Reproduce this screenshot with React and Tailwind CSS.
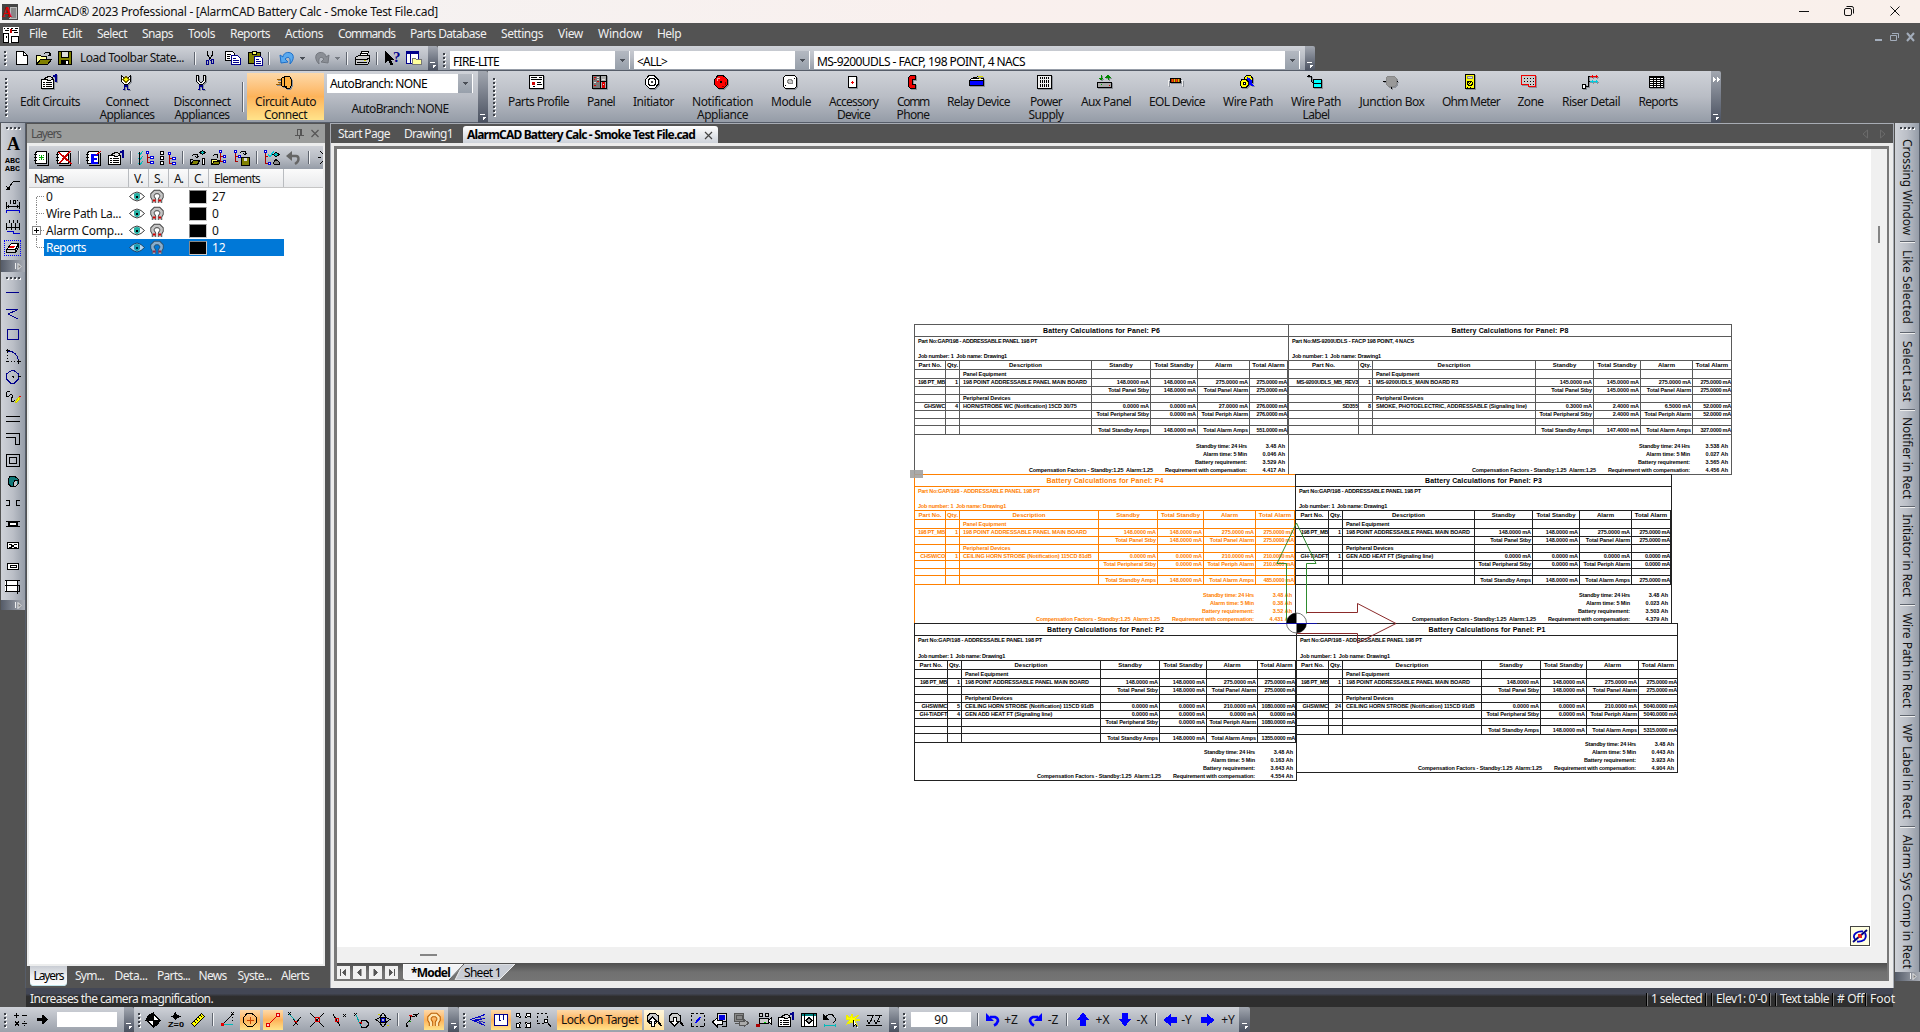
import React, { useLayoutEffect, useRef, useState } from "react";

/* Text whose tracking is tuned so that the run spans a given length. */
function Fit({ w, v, className = "", children }) {
  const ref = useRef(null);
  const [ls, setLs] = useState(null);
  useLayoutEffect(() => {
    const r = ref.current.getBoundingClientRect();
    const n = String(children).length;
    setLs((w - (v ? r.height : r.width)) / n);
  }, []);
  return (
    <span ref={ref} className={"inline-block whitespace-pre " + className} style={ls === null ? undefined : { letterSpacing: ls + "px" }}>
      {children}
    </span>
  );
}

const K = "#000";
const N = "none";
const B = "#00008b";
const MAG = "M5 14V10.5L3.5 8V5.5L6 3H10L12.5 5.5V8L11 10.5V14";
/* Each glyph is a list of [stroke, fill, path, strokeWidth?] or { t, x, y, s, c, f } captions. */
const G = {
  app: [[N, "#444", "M0 0H16V16H0Z"], ["#bbb", "#888", "M9 3H14V14H8Z"], { t: "A", x: 0, y: 13, s: 14, c: "#e00000", f: "Liberation Serif" }],
  doc: [[N, "#fff", "M0 0H16V16H0Z"], [K, "#fff", "M.5 6.5H5.5V15.5H.5ZM8.5 9.5H15.5V15.5H8.5Z"], [K, N, "M1 1.5H2M4 1.5H6M8 1.5H10M12 1.5H15M2 3.5H6M9 3.5H14M11 5.5H15M3 9V11"], ["#c00", "#c00", "M7.5 2.5H8.5V5.5H7.5Z"]],
  new: [[K, "#fff", "M2.5 1.5H9.5L13.5 5.5V14.5H2.5Z"], [K, N, "M9.5 1.5V5.5H13.5"]],
  open: [[K, "#ffff9c", "M.5 13.5V5.5H4.5L5.5 6.5H10.5V9.5H4.5Z"], [K, "#808000", "M.5 14.5L4.5 9.5H15.5L11.5 14.5Z"], [K, N, "M8 3.5L10 2.5H13L14 4.5M11.5 5.5H14.5V2.5"]],
  save: [[K, "#808000", "M1.5 1.5H14.5V14.5H1.5Z"], [K, "#ddd", "M4.5 1.5H11.5V7.5H4.5Z"], [N, K, "M4 10H12V15H4Z"], [N, "#fff", "M9 11H11V14H9Z"]],
  cut: [[K, N, "M5.5 1V5L8.5 9M10.5 1V5L7.5 9"], [B, N, "M4.5 10.5H6.5V14.5H4.5ZM9.5 9.5H11.5V13.5H9.5ZM7 9L9 11"]],
  copy: [[K, "#fff", "M.5 1.5H7.5L9.5 3.5V10.5H.5Z"], [B, "#fff", "M6.5 5.5H12.5L15.5 8.5V14.5H6.5Z"], [K, N, "M2 4.5H6M2 6.5H5M2 8.5H5"], [B, N, "M8 8.5H11M8 10.5H14M8 12.5H14"]],
  paste: [[K, "#808000", "M1.5 2.5H13.5V13.5H1.5Z"], [K, "#ffff66", "M5.5 1.5H9.5V4.5H5.5Z"], [B, "#fff", "M7.5 6.5H13.5L15.5 8.5V15.5H7.5Z"], [B, N, "M9 9.5H12M9 11.5H14M9 13.5H14"]],
  undo: [["#1e6fc8", "#5aa9ee", "M1 5L2 13L9 12L6 9C9 6 12 7 11 14C16 9 15 3 10 2.5C6 2 4 5 4 7Z"]],
  redo: [["#74787f", "#8a8e95", "M15 5L14 13L7 12L10 9C7 6 4 7 5 14C0 9 1 3 6 2.5C10 2 12 5 12 7Z"]],
  print: [[K, "#fff", "M4.5 6.5L6.5 1.5H13.5L11.5 6.5Z"], [K, "#ccc", "M.5 7.5L3.5 5.5H14.5V11.5L12.5 14.5H.5Z"], [K, N, "M1 9.5H12L15 7M2 12.5H12M6 3.5H12"], [N, "#cc0", "M9 10H11V11H9Z"]],
  help: [[K, K, "M.5 1.5V12.5L3.5 9.5L5.5 14.5H7.5L5.5 9.5H8.5Z"], { t: "?", x: 8, y: 12, s: 15, c: B, f: "Liberation Serif" }],
  win: [[B, "#fff", "M.5 1.5H12.5V13.5H.5Z"], [N, B, "M0 1H13V4H0Z"], [B, N, "M4.5 4V13"], ["#777", "#ffff9c", "M6.5 8.5H9.5L10.5 9.5H15.5V14.5H6.5Z"]],
  props: [[K, "#fff", "M.5 5.5H12.5V14.5H.5Z"], [K, N, "M2 8.5H4M5 8.5H11M2 10.5H4M5 10.5H11M2 12.5H4M5 12.5H11M3 5L6 3H10L12 5M7 6L10 4"], [K, "#ddd", "M4 5L8 2L12 4L9 7Z"], [N, B, "M12 1H14V3H12ZM14 0H16V8H14Z"]],
  conn: [[K, "#fff", "M3.5 1.5V7.5L6.5 10.5H9.5L12.5 7.5V1.5L10.5 3.5V6.5L8.5 8.5H7.5L5.5 6.5V3.5Z"], ["#776600", "#ff0", "M8 2.5L11 5.5L8 8.5L5 5.5Z"], [N, B, "M6 11H10V15H12V16H9V13H7V16H5V15H6Z"]],
  disc: [[K, "#eee", "M3.5 1.5V7.5L6.5 10.5H9.5L12.5 7.5V1.5H10.5V6.5L8.5 8.5H7.5L5.5 6.5V1.5Z"], [N, B, "M6 11H10V15H12V16H9V13H7V16H5V15H6Z"]],
  plug: [[K, "#ffb040", "M5.5 4.5L8.5 2.5H13.5L15.5 5.5V11.5L13.5 14.5H10.5L9.5 12.5H6.5L5.5 11.5Z"], [K, N, "M8.5 3V12M10.5 12V14"], ["#a06000", N, "M1 5.5H5M0 10.5H5M2 8.5H5"]],
  profile: [[K, "#fff", "M.5 1.5H14.5V14.5H.5Z"], [K, N, "M2 3.5H8M10 3.5H13M2 5.5H13M8 8.5H12M8 10.5H13M4 12.5H6"], [N, "#c00", "M3 8H6V11H3Z"]],
  panel: [[K, "#aaa", "M.5 1.5H14.5V14.5H.5Z"], [K, "#777", "M.5 1.5H8.5V14.5H.5Z"], [N, "#d00", "M2 3H4V4H2ZM2 5H3V6H2ZM5 7H7V8H5ZM2 11H4V12H2ZM10 8H13V14H10Z"], ["#ddd", N, "M5 3.5H7M5 5.5H7M2 8.5H4M9.5 5.5H13M11 10.5H12"], [K, N, "M9 7.5H14"]],
  init: [[K, "#fff", "M5 1.5H10L14.5 6V10L10.5 14.5H5.5L1.5 10.5V5.5Z"], [K, N, "M6 4.5H10L11.5 6V10L10 11.5H6L4.5 10V6Z"], ["#444", N, "M7 7.5H9M7 8.5H9"]],
  bell: [[K, "#f00", "M5 1.5H10L14.5 5.5V10.5L10.5 14.5H5.5L1.5 10.5V5.5Z"], [N, "#ff9c9c", "M4 4H7V5H5V7H4Z"], [N, "#800", "M9 12H11V13H9ZM12 8H13V11H12Z"], [N, K, "M7 7H9V9H7Z"]],
  module: [[K, "#fff", "M3.5 1.5H12.5L14.5 3.5V12.5L12.5 14.5H3.5L1.5 12.5V3.5Z"], ["#888", "#ccc", "M6.5 5.5H9.5V6.5H10.5V9.5H6.5V8.5H5.5V6.5H6.5Z"], [K, N, "M12 4.5H13M3 11.5H4"]],
  acc: [[K, "#fff", "M4.5 2.5H12.5V13.5H4.5Z"], ["#e00", N, "M7 8H10M8.5 6.5V9.5"]],
  phone: [[K, "#e00", "M6.5 1.5H11.5V5.5H8.5V10.5H11.5V14.5H6.5L4.5 12.5V3.5Z"]],
  relay: [[K, "#00f", "M.5 6.5H14.5V11.5H.5Z"], [K, "#fff", "M.5 6.5L2.5 4.5H14.5V6.5Z"], [K, N, "M2 4.5L10 2.5"], ["#dd0", N, "M9 2.5H14M10 4.5H12"]],
  power: [[K, "#eee", "M.5 1.5H14.5V14.5H.5Z"], [K, N, "M3.5 3V13M5.5 3V13M7.5 3V13M9.5 3V13M11.5 3V13"], ["#eee", N, "M2 5.5H13M2 9.5H13"]],
  aux: [[K, "#aaa", "M.5 8.5H14.5V13.5H.5Z"], [N, "#0a0", "M4 10H5V11H4Z"], [N, "#d00", "M12 11H13V12H12Z"], ["#080", "#080", "M2 4H6L4 6ZM4 1V4M9 3H13L11 1ZM11 3V6"]],
  eol: [["#eee", N, "M.5 12V6.5H3M12 6.5H14.5V12"], [K, "#a30", "M2.5 4.5H12.5V8.5H2.5Z"], ["#f40", N, "M4.5 5V8M8.5 5V8"], ["#cc0", N, "M6.5 5V8M10.5 5V8"]],
  wire: [[K, "#ff0", "M5 4L7.5 1.5H11.5L13.5 4V8L10 10Z"], ["#00f", "#00f", "M8.5 3.5L12 6V10L15 12L10 10Z"], [K, "#ff0", "M3 5.5H7L9.5 8V11L7 13.5H3L1.5 11V8Z"], [K, "#fff", "M4.5 8.5H6.5V10.5H4.5Z"]],
  wlabel: [[K, N, "M0 2.5H4.5V7.5L7 10M1 1.5H3"], [K, "#0ff", "M6.5 5.5H14.5V13.5H6.5Z"], [K, N, "M7 9.5H14"]],
  junc: [[K, N, "M0 7.5H4M12 7.5H15M8 12V15"], ["#888", "#999", "M4.5 2.5H11.5L13.5 4.5V10.5L11.5 12.5H5.5L3.5 10.5V3.5Z"]],
  ohm: [[K, "#ff0", "M3.5 .5H12.5V14.5H3.5Z"], ["#888", "#ddd", "M5.5 2.5H10.5V4.5H5.5Z"], [K, N, "M6 8.5L7.5 7H9L10.5 8.5V10L9 11.5H7L5.5 10V8ZM7 10L10 7M5 13.5H6M8 13.5H9"]],
  zone: [["#e00", "#ccc", "M.5 1.5H14.5V12.5H7.5V10.5H.5Z"], [K, N, "M3 4.5H4M6 4.5H7M9 4.5H10M12 4.5H13M3 7.5H4M6 7.5H7M9 7.5H10M12 7.5H13M9 10.5H10M12 10.5H13"]],
  riser: [[K, "#fff", "M.5 10.5H3.5V14.5H.5Z"], [K, N, "M4 12.5H6.5V2.5H9M6.5 7.5H9"], ["#e00", N, "M8 2.5H16M10 1V4M14 1V4"], ["#0cd", N, "M8 7.5H16M10 6V9M14 6V9"]],
  reports: [[K, "#fff", "M.5 2.5H14.5V13.5H.5Z"], [K, N, "M1 3.5H14M1 5.5H14M1 7.5H14M1 9.5H14M1 11.5H14M4.5 3V13M7.5 3V13M11.5 3V13"]],
  lnew: [[K, "#fff", "M1.5 2.5L3.5 1.5H12.5V13.5H1.5Z"], [K, N, "M14.5 3V15.5H3M0 4.5H3M0 7.5H3M0 10.5H3"], ["#0a0", N, "M7.5 5V10M5 7.5H10M5 5L6 6M10 5L9 6M5 10L6 9M10 10L9 9"]],
  ldel: [[K, "#fff", "M1.5 2.5L3.5 1.5H12.5V13.5H1.5Z"], [K, N, "M14.5 3V15.5H3M0 4.5H3M0 7.5H3M0 10.5H3"], ["#c00", N, "M2 2L15 14M3 2L16 14M14 1L3 13M15 1L4 13"]],
  ledit: [[K, "#fff", "M1.5 2.5L3.5 1.5H12.5V13.5H1.5Z"], [K, N, "M14.5 3V15.5H3M0 4.5H3M0 7.5H3M0 10.5H3"], [N, "#00f", "M5 4H12V6H8V8H11V10H8V12H12V14H5Z"], ["#c00", N, "M10 5L15 1"]],
  checks: [["#0bb", N, "M0 3L2 5L5 1M0 8L2 10L5 6M0 13L2 15L5 11"], [K, N, "M1.5 2V15"], ["#00d", "#fff", "M8.5 1.5H10.5V3.5H8.5ZM12.5 6.5H15.5V8.5H12.5ZM12.5 11.5H15.5V13.5H12.5Z"], ["#a00", N, "M9.5 4V12.5H12M9.5 7.5H12"]],
  boxes: [[K, "#fff", "M.5 1.5H3.5V4.5H.5ZM.5 6.5H3.5V9.5H.5ZM.5 11.5H3.5V14.5H.5Z"], ["#00d", "#fff", "M8.5 2.5H10.5V4.5H8.5ZM12.5 7.5H15.5V9.5H12.5ZM12.5 12.5H15.5V14.5H12.5Z"], ["#a00", N, "M9.5 5V13.5H12M9.5 8.5H12"]],
  eyeopen: [[K, "#808000", "M.5 14.5L3.5 10.5H9.5L7.5 14.5Z"], [K, N, "M2 6L4 4H7V8M5 6L7 8L9 6M.5 14V9H3"], [K, "#0bb", "M10 2.5L12.5 .5L15 2.5L12.5 4.5Z"], [K, "#fff", "M12.5 8.5H14.5V14.5H12.5Z"]],
  treeopen: [[K, "#ff6", "M.5 14.5V9.5H4L9.5 11L7.5 14.5Z"], [K, "#808000", "M.5 14.5L3 11.5H9.5L7.5 14.5Z"], [K, N, "M2 6L4 4H6V8"], ["#00d", "#fff", "M8.5 .5H10.5V2.5H8.5ZM12.5 5.5H14.5V7.5H12.5ZM12.5 10.5H14.5V12.5H12.5Z"], ["#a00", N, "M9.5 3V11.5H12M9.5 6.5H12"]],
  treesave: [["#00d", "#fff", "M.5 .5H2.5V2.5H.5ZM4.5 5.5H6.5V7.5H4.5Z"], ["#a00", N, "M1.5 3V11.5H4M1.5 6.5H4"], [K, N, "M6 3L8 1H11V5M9 3L11 5L13 3"], [K, "#808000", "M7.5 7.5H15.5V15.5H7.5Z"], [N, "#ddd", "M10 8H13V11H10Z"]],
  treeeye: [["#00d", "#fff", "M.5 .5H2.5V2.5H.5ZM4.5 12.5H6.5V14.5H4.5Z"], ["#a00", N, "M1.5 3V13.5H4M1.5 6.5H4"], ["#0cd", N, "M4 4L6 6L10 1M4 5L6 7L10 2"], [K, "#0bb", "M9 4.5L12 2.5L15.5 4.5L12 6.5Z"], [K, "#888", "M9.5 12.5L12 9.5L15.5 12.5V14H10Z"]],
  gundo: [["#666", N, "M4 6H10Q12.500 6 12.500 9Q12.500 12 9 14", 2.4], [N, "#666", "M0 6L6 1V11Z"]],
  sun: [[K, N, "M2 1L5 4M0 7.5H3M2 14L5 11"], ["#cc0", "#ff0", "M5.5 4.5H9V11H5.5Z"]],
  eye: [["#222", "#fff", "M.5 7.5L4 4.5L8 3L12 4.5L15.500 7.5L12 10.5L8 12L4 10.500Z", 0.9], [N, "#27b0a4", "M5 5L7 4H9L11 5V9L9 11H7L5 9Z"], [N, K, "M7 7H9V9H7Z"]],
  magnet: [["#444", N, MAG, 4.4], ["#c6c6c6", N, MAG, 2.6], ["#d00", N, "M4 11.5H6.500M9.500 11.5H12", 2]],
  textA: [{ t: "A", x: 2, y: 15, s: 18, c: K, f: "Liberation Serif" }],
  abc: [{ t: "ABC", x: 0, y: 7, s: 7.5, c: K, f: "Liberation Mono", w: 15 }, { t: "ABC", x: 0, y: 15, s: 7.5, c: K, f: "Liberation Mono", w: 15 }],
  leader: [[K, N, "M1 13L5 9L8 5L11 4.5H15M1 9L4 12M1 12H4V9"]],
  dim: [[K, N, "M1.5 4V11M14.5 4V11M1 8.5H15M3 7V10M12 7V10M5.5 2V6M8 2.5H10V5.5H8ZM12 2V3"], ["#00c", N, "M1.5 15V12.5H14.5V15"]],
  dim2: [[K, N, "M1.5 4V11M6.5 4V11M10.5 4V11M14.5 4V11M1 8.5H15M4 1V4M8 1V4M12 1V4"], ["#00c", N, "M1.5 12.5H8V14.5H14.5"]],
  eraser: [[K, "#fff", "M1.5 9.5L6.5 3.5H13.5L10.5 9.5Z"], [K, "#ccc", "M10.5 9.5L13.5 3.5V7.5L10.5 12.5ZM1.5 9.5H10.5V12.5H1.5Z"], [N, "#e00", "M4 8L5.500 6H10L9 8Z"]],
  line: [[B, N, "M1 7.5H14"]],
  poly: [[B, N, "M1 3.5H13L3 8L13 13"]],
  rect: [[B, N, "M2.5 2.5H13.5V12.5H2.5Z"]],
  arc: [[B, N, "M3 3C9 3 13 7 13.5 13"], [K, N, "M1 2.5H5M2.5 1V5M2.5 7V8M2.5 10V11M1 13.5H4M6 13.5H7M9 13.5H10M12 13.5H16M13.5 12V16"]],
  circ: [[B, N, "M5 2.5L7 1.5H9L13.5 5V10L9 14.5H6L1.5 10V5Z"], [K, N, "M7 7.5H9M8 6.5V9M13 7.5H16"]],
  free: [[K, N, "M5 2L3 1L1 3V6L3 7L6 4L8 6L6 9V11L8 12L10 10"], ["#cc0", "#ff0", "M10 12L14 7L15 9L11 13Z"], ["#e00", N, "M14 6L16 7"]],
  dline: [[K, N, "M1 5.5H15M1 10.5H15"]],
  dpoly: [[K, N, "M1 1.5H14.5V13M1 5.5H10.5V13M14 12.5H11"]],
  drect: [[K, N, "M1.5 1.5H14.5V13.5H1.5ZM4.5 4.5H11.5V10.5H4.5Z"]],
  dcirc: [[K, "#107878", "M5 2.5H10L13 5V10L10 12.5H6L3.5 10V5Z"], [N, "#c3c6cc", "M8 12L8 9L10 6L12 6V10L10 12Z"], [K, N, "M8 12.5V9L10 6.500H12.500"]],
  gap: [[K, N, "M1 5.5H4.5V10.5H1M15 5.5H11.5V10.5H15"]],
  seg: [[K, "#fff", "M4.5 6.5H11.5V9.5H4.5Z"], [K, N, "M1 5.5H15M1 10.5H15M3.5 5V11M12.5 5V11"]],
  segx: [[K, "#fff", "M2.5 5.5H13.5V11.5H2.5Z"], [K, N, "M4 7.5H6L9 10H12M4 10.5H6L10 7.5H12"]],
  segr: [[K, "#fff", "M2.5 5.5H13.5V11.5H2.5Z"], [K, N, "M5 7.5H11V9.5H5Z"]],
  grid: [[N, "#fff", "M0 1H12V13H0Z"], [K, N, "M0 1.5H15M0 6.5H15M0 12.5H15M1.5 1V13M12.5 1V15M14.5 7V13"]],
  plus: [[K, N, "M1 3.5H6M3.5 1V6M9 3.5H14M2 9.5L6 13.5M6 9.5L2 13.5M9 11.5H14M11.5 9V10M11.5 13V14"]],
  go: [[N, K, "M3 6H8V3H9L13.5 7.5L9 12H8V9H3Z"]],
  target: [[K, "#fff", "M8 1.5L14.5 8L8 14.5L1.5 8Z"], [N, K, "M8 1V8H1Q2 2 8 1ZM8 8H15Q14 14 8 15Z"], [K, N, "M0 8H16M8 0V16"]],
  zzero: [[N, K, "M7 0H8L9 3L13 4V5L9 6L8 8H7L6 6L3 5V4L6 3Z"], { t: "Z=0", x: 0, y: 15, s: 7.5, c: K, f: "Liberation Sans", w: 16 }],
  ruler: [[K, "#ff0", "M1.5 11.5L11.5 1.5L14.5 4.5L4.5 14.5Z"], [K, N, "M4 9L6 11M6 7L8 9M8 5L10 7M10 3L12 5"]],
  s1: [["#0bb", N, "M1 12.5H13M1 11L3 14"], [K, N, "M3 12L12 3M12.5 1V3M12.5 5V6M12.5 8V9M11 0L14 3M14 0L11 3"], ["#d00", "#f00", "M1.5 11.5H3.5V13.5H1.5Z"]],
  s2: [[K, N, "M5 1.5H10L14.5 5.5V10.5L10.5 14.5H5.5L1.5 10.5V5.5Z"], ["#c40", N, "M8.500 5V12M5 8.500H12"]],
  s3: [["#d00", "#fcc", "M11.5 1.5H14.5V4.5H11.5ZM1.5 11.5H4.5V14.5H1.5Z"], ["#d00", N, "M4 12L12 4"]],
  s4: [["#0aa", N, "M3 2L9 8"], [K, N, "M2 0L5 3M5 0L2 3M7 14L15 5M7 7L12 13"], ["#d00", N, "M8 9H10V11"]],
  s5: [[K, N, "M1 1L15 15M15 1L1 15"], ["#d00", N, "M6.5 5.5H10.5V9.5H6.5Z"]],
  s6: [[K, N, "M2 2L9 14M12 2L15 5M15 2L12 5"], ["#d00", N, "M4.5 6.5H7.5V9.5H4.5Z"]],
  s7: [[K, N, "M1 1L4 4M4 1L1 4M9 8.5H13L15.5 11V13L13 15.5H9L7.5 13V11Z"], ["#0aa", N, "M3 3L8 14"], ["#d00", N, "M6 10H8V12"]],
  s8: [[K, N, "M1 7.5L5 5.5H11L15 7.5L11 10.5H5ZM8 1L5.5 4V12L8 15L10.5 12V4Z"], ["#00c", N, "M6.5 6.5H9.5V9.5H6.5Z"], ["#cc0", N, "M3 2H5M12 13H14"]],
  s9: [[K, N, "M2 15V12L6 8V4L10 5L15 1M3 15V13M9 2H12V5"], ["#d00", N, "M5 3H7V5"], ["#080", N, "M5 9H7"]],
  omag: [["#b85c00", N, MAG, 4.4], ["#ffe6b0", N, MAG, 2.4]],
  layers: [["#00c", N, "M15 2.500L1 7.500L15 13.500M15 6.500L5 8L15 10.500"], ["#44a", N, "M8 5L13 7M8 11L13 9"]],
  plan: [[B, "#fff", "M1.5 2.5H14.5V13.5H1.5Z"], [B, N, "M6.5 3V8M10.5 3V8M6 8.5H8"]],
  extents: [[K, "#fff", "M1 1H5L4 3L6 5L5 6L3 4L1 5ZM15 1H11L12 3L10 5L11 6L13 4L15 5ZM1 15H5L4 13L6 11L5 10L3 12L1 11ZM15 15H11L12 13L10 11L11 10L13 12L15 11Z"]],
  zwin: [[K, N, "M1 1.5H3M5 1.5H7M9 1.5H11M1.5 4V6M1.5 8V10M1 11.5H4M6 11.5H8M11.5 4V6"], [K, "#fff", "M8.5 7.5H11.5V10.5H8.5Z"], [K, N, "M12 11L15 14M12 12L15 15"]],
  zin: [[K, "#ccc", "M4 1.5H9L12.5 4V9L9 11.5H4L1.5 9V4Z"], [K, "#fff", "M6.5 5L11 9.5H8.5V14H5.5V9.5H2Z"], [K, N, "M11 9L15 14M12 9L16 14"]],
  zout: [[K, "#ccc", "M4 1.5H9L12.5 4V9L9 11.5H4L1.5 9V4Z"], [K, "#fff", "M6.5 14L11 9.5H8.5V5H5.5V9.5H2Z"], [K, N, "M11 9L15 14M12 9L16 14"]],
  sel: [[K, N, "M1 1.5H4M6 1.5H8M10 1.5H14M1.5 3V5M1.5 7V9M1.5 11V14M14.5 3V5M14.5 7V9M14.5 11V14M1 14.5H4M6 14.5H8M10 14.5H14"], ["#00f", N, "M5 11L10 5M6 11L11 5"]],
  prev: [[K, "#ddd", "M5.5 1.5H14.5V9.5H5.5Z"], [N, "#00d", "M7 3H13V8H7Z"], [K, "#fff", "M.5 10L5 6V8.5H10V12.5H5V14.5Z"], [K, N, "M10 14.5H14V10"]],
  next: [["#555", "#888", "M1.5 1.5H10.5V9.5H1.5Z"], ["#555", N, "M3 3.5H9V7.5H3ZM2 11.5H8"], ["#555", "#aaa", "M15.5 11L11 7V9.5H6V13H11V15Z"]],
  cam: [[K, "#ccc", "M3.5 1.5H6.5V4.5H3.5ZM9.5 1.5H12.5V4.5H9.5ZM3.5 6.5H12.5V11.5H3.5Z"], [K, "#fff", "M12 8L15.5 6V12L12 10Z"], [N, "#a00", "M0 12H4V15H0Z"], ["#0c0", N, "M8 10H10"]],
  view: [[K, "#fff", "M.5 1.5H15.5V14.5H.5Z"], [N, "#008080", "M1 2H15V4H1Z"], [K, N, "M3.5 2V14M12.5 2V14M8 5V12M5 8.5H11"], [K, "#aaa", "M8 5.5L11 8.5L8 11.5L5 8.5Z"]],
  rot: [[K, N, "M3 5L7 2.5H10L13 6V9L11 11"], [N, K, "M1 2V8H7Z"], ["#0bb", N, "M3 13.5H13M2 12V15M13 12V15"]],
  flash: [["#ee0", "#ff0", "M1 3L5 6L7 2L8 6L14 3L10 7L15 8L10 9L12 13L7 10L2 12L5 8L1 7Z"], [K, "#fff", "M8.5 7.5V14.5L10.5 12.5L12.5 15.5"]],
  vars: [[K, N, "M1 3.5H8M9 3.5H16M0 13.5H16M1 8L3 12L7 4M8 8L10 12L14 4M4 8H6M12 9H14"]],
  ccw: [["#00f", N, "M5 5H10Q13 6 13 9Q12 12 9 13.500", 2.6], [N, "#00f", "M1 1V9H9Z"]],
  cw: [["#00f", N, "M11 5H6Q3 6 3 9Q4 12 7 13.500", 2.6], [N, "#00f", "M15 1V9H7Z"]],
  up: [["#00f", "#00f", "M8 1.5L13.5 7.5H10.5V13.5H5.5V7.5H2.5Z"]],
  down: [["#00f", "#00f", "M8 13.5L2.5 7.5H5.5V1.5H10.5V7.5H13.5Z"]],
  left: [["#00f", "#00f", "M1.5 8L7.5 2.5V5.5H13.5V10.5H7.5V13.5Z"]],
  right: [["#00f", "#00f", "M14.5 8L8.5 2.5V5.5H2.5V10.5H8.5V13.5Z"]],
  compass: [["#0000c8", N, "M3.500 12Q0 8 4 5Q7 3 11 3.500M5 13.500Q9 14 12 12Q15 9 13 5", 1.8], ["#000080", N, "M1 14L15 2", 2], [N, "#e22", "M6 6H9L10 8V10H7L6 9Z"]],
};
const SMOOTH = ["eye", "magnet", "omag", "gundo", "compass", "ccw", "cw", "undo", "redo"];

function Ic({ n, shadow, className = "" }) {
  return (
    <svg width="16" height="16" viewBox="0 0 16 16" shapeRendering={SMOOTH.includes(n) ? "auto" : "crispEdges"} className={"block shrink-0 overflow-visible " + (shadow ? "drop-shadow-[1px_1px_0_#8c9199] " : "") + className}>
      {G[n].map((g, i) =>
        Array.isArray(g) ? (
          <path key={i} d={g[2]} stroke={g[0]} fill={g[1]} strokeWidth={g[3] || 1} />
        ) : (
          <text key={i} x={g.x} y={g.y} fontSize={g.s} fill={g.c} fontFamily={g.f} fontWeight="bold" textLength={g.w} lengthAdjust="spacingAndGlyphs">{g.t}</text>
        )
      )}
    </svg>
  );
}

const C = ({ w, children, className = "" }) => <div className={`${w} flex shrink-0 items-center justify-center whitespace-nowrap ${className}`}>{children}</div>;

/* Raised two-tone separator */
const Sep = ({ w, h = "h-[13px]" }) => (
  <C w={w}>
    <div className={`${h} w-[2px] border-l border-[#5f656f] bg-[#f2f3f5]`} />
  </C>
);

function Grip({ n = 4, horizontal }) {
  return (
    <div className={"flex gap-[2px] " + (horizontal ? "flex-row" : "flex-col")}>
      {Array.from({ length: n }, (_, i) => (
        <div key={i} className="h-[2px] w-[2px] bg-[#3d4148] shadow-[1px_1px_0_#fff]" />
      ))}
    </div>
  );
}

const Cap = ({ w = "w-[10px]", more }) => (
  <div className={`${w} flex shrink-0 flex-col items-center justify-between rounded-r-[2px] bg-gradient-to-b from-[#a2a7b0] to-[#4a5160] pb-[3px] pt-[6px]`}>
    {more ? (
      <svg width="7" height="5" viewBox="0 0 7 5" shapeRendering="crispEdges" fill="#fff"><path d="M0 0L3 2.500L0 5ZM4 0L7 2.500L4 5Z" /></svg>
    ) : (
      <div />
    )}
    <svg width="6" height="6" viewBox="0 0 6 6" shapeRendering="crispEdges">
      <path d="M0 .5H5M3 3.5H6M3 4.5H5M3 5.5H4" stroke="#fff" />
    </svg>
  </div>
);

const bar = "flex shrink-0 items-stretch bg-gradient-to-b from-[#cfd2d8] via-[#b9bdc5] to-[#959ca7]";

const Caret = () => (
  <svg width="5" height="3" viewBox="0 0 5 3" shapeRendering="crispEdges">
    <path d="M0 0H5L2.5 3Z" fill="#4a4f57" />
  </svg>
);

const Combo = ({ w, text, tw, h = "h-[18px]", ty = "pt-[3px]" }) => (
  <div className={`${w} ${h} flex shrink-0 items-center justify-between bg-white pl-[3px] pr-px`}>
    <Fit w={tw} className={"text-black " + ty}>{text}</Fit>
    <div className="flex h-full w-[14px] items-center justify-center bg-gradient-to-b from-[#b4b9c1] to-[#98a0ab]">
      <Caret />
    </div>
  </div>
);

const orange = "bg-gradient-to-b from-[#fdd9a8] via-[#fdb35a] to-[#ffe38a]";

const menus = [["File", 18], ["Edit", 20], ["Select", 30], ["Snaps", 31], ["Tools", 27], ["Reports", 40], ["Actions", 38], ["Commands", 57], ["Parts Database", 76], ["Settings", 42], ["View", 25], ["Window", 44], ["Help", 24]];

function Big({ w, ic, lines, active }) {
  return (
    <div className={`${w} flex shrink-0 flex-col items-center ${active ? orange + " my-[2px] pt-px" : "pt-[3px]"}`}>
      <Ic n={ic} shadow className="mr-[3px]" />
      <div className="mt-[5px] flex flex-col items-center">
        {lines.map(([t, tw]) => (
          <Fit key={t} w={tw} className="leading-[13px] text-[#111]">{t}</Fit>
        ))}
      </div>
    </div>
  );
}

const parts = [
  ["w-[77px]", "profile", [["Parts Profile", 61]]],
  ["w-[48px]", "panel", [["Panel", 28]]],
  ["w-[57px]", "init", [["Initiator", 41]]],
  ["w-[81px]", "bell", [["Notification", 61], ["Appliance", 51]]],
  ["w-[56px]", "module", [["Module", 40]]],
  ["w-[69px]", "acc", [["Accessory", 49], ["Device", 33]]],
  ["w-[50px]", "phone", [["Comm", 32], ["Phone", 33]]],
  ["w-[81px]", "relay", [["Relay Device", 63]]],
  ["w-[54px]", "power", [["Power", 32], ["Supply", 35]]],
  ["w-[66px]", "aux", [["Aux Panel", 50]]],
  ["w-[76px]", "eol", [["EOL Device", 56]]],
  ["w-[66px]", "wire", [["Wire Path", 50]]],
  ["w-[70px]", "wlabel", [["Wire Path", 50], ["Label", 27]]],
  ["w-[82px]", "junc", [["Junction Box", 65]]],
  ["w-[76px]", "ohm", [["Ohm Meter", 58]]],
  ["w-[43px]", "zone", [["Zone", 26]]],
  ["w-[78px]", "riser", [["Riser Detail", 58]]],
  ["w-[56px]", "reports", [["Reports", 39]]],
];

function TopBars() {
  return (
    <>
      <div className="flex h-[25px]">
        <div className={bar + " w-[428px] border-b border-[#565d69]"}>
          <C w="w-[10px]"><Grip /></C>
          <C w="w-[23px]"><Ic n="new" /></C>
          <C w="w-[21px]"><Ic n="open" /></C>
          <C w="w-[22px]"><Ic n="save" /></C>
          <C w="w-[112px]"><Fit w={104}>Load Toolbar State...</Fit></C>
          <Sep w="w-[14px]" />
          <C w="w-[15px]"><Ic n="cut" /></C>
          <C w="w-[31px]"><Ic n="copy" /></C>
          <C w="w-[13px]"><Ic n="paste" /></C>
          <Sep w="w-[16px]" />
          <C w="w-[19px]"><Ic n="undo" /></C>
          <C w="w-[12px]"><Caret /></C>
          <C w="w-[27px]"><Ic n="redo" /></C>
          <C w="w-[5px]" className="opacity-60"><Caret /></C>
          <Sep w="w-[14px]" />
          <C w="w-[17px]"><Ic n="print" /></C>
          <Sep w="w-[12px]" />
          <C w="w-[19px]"><Ic n="help" /></C>
          <C w="w-[24px]"><Ic n="win" /></C>
        </div>
        <Cap />
        <div className={bar + " w-[867px] gap-[4px] border-b border-[#565d69] pt-[5px]"}>
          <div className="-mr-[4px] flex w-[12px] items-start justify-center pt-[2px]"><Grip /></div>
          <Combo w="w-[180px]" text="FIRE-LITE" tw={46} />
          <Combo w="w-[176px]" text="<ALL>" tw={30} />
          <Combo w="w-[486px]" text="MS-9200UDLS - FACP, 198 POINT, 4 NACS" tw={208} />
        </div>
        <Cap />
      </div>
      <div className="flex h-[52px]">
        <div className={bar + " w-[478px] border-b border-[#565d69]"}>
          <C w="w-[11px]"><Grip n={10} /></C>
          <Big w="w-[78px]" ic="props" lines={[["Edit Circuits", 60]]} />
          <Big w="w-[76px]" ic="conn" lines={[["Connect", 43], ["Appliances", 55]]} />
          <Big w="w-[74px]" ic="disc" lines={[["Disconnect", 57], ["Appliances", 55]]} />
          <Sep w="w-[8px]" h="h-[30px]" />
          <Big w="w-[77px]" ic="plug" lines={[["Circuit Auto", 61], ["Connect", 43]]} active />
          <div className="ml-[3px] flex flex-col items-center gap-[8px] pt-[3px]">
            <Combo w="w-[146px]" h="h-[19px]" ty="pt-px" text="AutoBranch: NONE" tw={97} />
            <Fit w={97} className="leading-[16px]">AutoBranch: NONE</Fit>
          </div>
        </div>
        <Cap />
        <div className={bar + " w-[1223px] border-b border-[#565d69]"}>
          <C w="w-[12px]"><Grip n={10} /></C>
          {parts.map(([w, ic, l], i) => (
            <Big key={i} w={w} ic={ic} lines={l} />
          ))}
        </div>
        <Cap more />
      </div>
    </>
  );
}

const tools1 = ["textA", "abc", "leader", "dim", "dim2"];
const tools2 = ["line", "poly", "rect", "arc", "circ", "free", "dline", "dpoly", "drect", "dcirc", "gap", "seg", "segx", "segr", "grid"];

const VCap = ({ h }) => (
  <div className={`${h} flex shrink-0 items-center justify-end bg-gradient-to-r from-[#555c69] to-[#a9adb5] pr-[3px]`}>
    <svg width="7" height="7" viewBox="0 0 7 7">
      <path d="M.5 0V6M3 .5L6 3.5L3 6.5Z" stroke="#eee" fill="#777" />
    </svg>
  </div>
);
const vbar = "flex flex-col items-center bg-gradient-to-r from-[#cfd2d8] via-[#bbbfc7] to-[#959ca7]";

function LeftTools() {
  return (
    <div className="w-[26px] shrink-0 border-r border-[#565d69] pl-px">
      <div className={vbar + " h-[137px] pt-[4px]"}>
        <Grip horizontal />
        <div className="mr-px mt-[3px] flex flex-col items-center">
          {tools1.map((t) => (
            <div key={t} className="flex h-[21px] w-[16px] items-center"><Ic n={t} /></div>
          ))}
          <div className="mt-[3px] flex h-[16px] w-[17px] items-center justify-center border border-dotted border-[#00f]"><Ic n="eraser" /></div>
        </div>
      </div>
      <VCap h="h-[12px]" />
      <div className={vbar + " h-[328px] pt-[5px]"}>
        <Grip horizontal />
        <div className="mr-px mt-[3px] flex flex-col">
          {tools2.map((t) => (
            <div key={t} className="flex h-[21px] items-center"><Ic n={t} /></div>
          ))}
        </div>
      </div>
      <VCap h="h-[10px]" />
    </div>
  );
}

const layerRows = [["0", 6, "27"], ["Wire Path La...", 75, "0"], ["Alarm Comp...", 77, "0"], ["Reports", 40, "12"]];
const heads = [["w-[100px]", "Name", 29], ["w-[20px]", "V.", 9], ["w-[20px]", "S.", 9], ["w-[20px]", "A.", 9], ["w-[20px]", "C.", 9], ["w-[75px]", "Elements", 46]];

function Layers() {
  return (
    <div className="flex w-[298px] shrink-0 flex-col">
      <div className="flex h-[19px] items-center justify-between bg-[#9b9d9c] pl-[4px] pr-[5px] text-[#4c4c4c]">
        <Fit w={30}>Layers</Fit>
        <svg width="26" height="12" viewBox="0 0 26 12" fill="none" stroke="#555">
          <path d="M3.5 1V7M7.5 1V7M3 1.5H8M1 7.5H10M5.5 8V11M6.5 1V7" shapeRendering="crispEdges" />
          <path d="M17.500 2L24.500 9M24.500 2L17.500 9" strokeWidth="1.2" />
        </svg>
      </div>
      <div className="flex h-[823px] flex-col overflow-hidden border-2 border-t-[3px] border-[#eceded] bg-white">
        <div className={bar + " h-[23px] overflow-hidden"}>
          <C w="w-[26px]"><Ic n="lnew" /></C>
          <C w="w-[18px]"><Ic n="ldel" /></C>
          <Sep w="w-[12px]" />
          <C w="w-[18px]"><Ic n="ledit" /></C>
          <C w="w-[26px]"><Ic n="props" /></C>
          <Sep w="w-[4px]" />
          <C w="w-[26px]"><Ic n="checks" /></C>
          <C w="w-[18px]"><Ic n="boxes" /></C>
          <Sep w="w-[12px]" />
          <C w="w-[18px]"><Ic n="eyeopen" /></C>
          <C w="w-[24px]"><Ic n="treeopen" /></C>
          <C w="w-[22px]"><Ic n="treesave" /></C>
          <Sep w="w-[8px]" />
          <C w="w-[22px]"><Ic n="treeeye" /></C>
          <C w="w-[22px]"><Ic n="gundo" /></C>
          <Sep w="w-[8px]" />
          <div className="flex items-center pl-[5px]"><Ic n="sun" /></div>
        </div>
        <div className="flex h-[19px] shrink-0 border-b border-[#c5c5c5] bg-gradient-to-b from-[#fbfbfb] to-[#e9eaec]">
          {heads.map(([w, t, tw]) => (
            <div key={t} className={`${w} flex items-center border-r border-[#b9bcc0] pl-[5px] pt-px`}><Fit w={tw}>{t}</Fit></div>
          ))}
        </div>
        {layerRows.map(([t, tw, num], i) => {
          const sel = i === 3;
          return (
            <div key={t} className="flex h-[17px] shrink-0">
              <div className="relative w-[15px]">
                <div className={"absolute left-[7px] border-l border-dotted border-[#888] " + (i === 3 ? "top-0 h-[8px]" : i === 0 ? "top-[9px] h-[8px]" : "top-0 h-[17px]")} />
                <div className="absolute left-[8px] top-[8px] w-[7px] border-t border-dotted border-[#888]" />
                {i === 2 && (
                  <svg className="absolute left-[3px] top-[4px]" width="9" height="9" shapeRendering="crispEdges"><path d="M.5 .5H8.500V8.500H.5Z" fill="#fff" stroke="#888" /><path d="M2 4.500H7M4.500 2V7" stroke="#000" /></svg>
                )}
              </div>
              <div className={"flex w-[240px] items-center " + (sel ? "bg-[#0078d7] text-white" : "")}>
                <div className="flex w-[83px] pl-[2px]"><Fit w={tw}>{t}</Fit></div>
                <C w="w-[19px]"><Ic n="eye" className={sel ? "opacity-70" : ""} /></C>
                <C w="w-[22px]"><Ic n="magnet" className={sel ? "opacity-70" : ""} /></C>
                <div className="ml-[21px] h-[14px] w-[18px] border border-b-[#c9c9c9] border-l-[#888] border-r-[#c9c9c9] border-t-[#888] bg-black" />
                <div className="pl-[5px]">{num}</div>
              </div>
            </div>
          );
        })}
      </div>
      <div className="flex h-[20px] items-center gap-[10px] pl-[3px] text-[#f0f0f0]">
        <div className="mr-[-2px] flex h-full w-[37px] items-center justify-center rounded-b-[4px] bg-gradient-to-b from-[#c8ccd3] via-[#eef0f2] to-[#fff] text-black shadow-[inset_0_-1px_0_#bfe4ea]"><Fit w={30}>Layers</Fit></div>
        <C w="w-[29px]"><Fit w={29}>Sym...</Fit></C>
        <C w="w-[34px]"><Fit w={33}>Deta...</Fit></C>
        <C w="w-[31px]"><Fit w={33}>Parts...</Fit></C>
        <C w="w-[27px]"><Fit w={28}>News</Fit></C>
        <C w="w-[37px]"><Fit w={34}>Syste...</Fit></C>
        <C w="w-[24px]"><Fit w={28}>Alerts</Fit></C>
      </div>
    </div>
  );
}

const H = ["Part No.", "Qty.", "Description", "Standby", "Total Standby", "Alarm", "Total Alarm"];
const m = (v) => v + " mA";
const GAP = "Part No:GAP/198 - ADDRESSABLE PANEL 198 PT";
const JOB = "Job number: 1  Job name: Drawing1";
const MAIN = ["198 PT_MB", "1", "198 POINT ADDRESSABLE PANEL MAIN BOARD", m("148.0000"), m("148.0000"), m("275.0000"), m("275.0000")];
const TPANEL = ["", "", "", "Total Panel Stby", m("148.0000"), "Total Panel Alarm", m("275.0000")];
const EQ = ["", "", "Panel Equipment"];
const PD = ["", "", "Peripheral Devices"];
const tper = (a, b) => ["", "", "", "Total Peripheral Stby", m(a), "Total Periph Alarm", m(b)];
const tamp = (a, b) => ["", "", "", "Total Standby Amps", m(a), "Total Alarm Amps", m(b)];
const sheets = [
  {
    pos: "left-[577px] top-[175px] w-[375px] h-[151px]", cols: "grid-cols-[31px_14px_132px_59px_47px_52px_38px]", id: "P6", gray: true,
    part: GAP, pw: 119, job: JOB, jw: 89,
    rows: [EQ, MAIN, TPANEL, PD, ["GHS/WC", "4", "HORN/STROBE WC (Notification) 15CD 30/75", m("0.0000"), m("0.0000"), m("27.0000"), m("276.0000")], tper("0.0000", "276.0000"), [], tamp("148.0000", "551.0000")],
    sum: ["3.48 Ah", "0.046 Ah", "3.529 Ah", "4.417 Ah"],
  },
  {
    pos: "left-[951px] top-[175px] w-[444px] h-[151px]", cols: "grid-cols-[70px_14px_163px_58px_47px_52px_39px]", id: "P8", gray: true,
    part: "Part No:MS-9200UDLS - FACP 198 POINT, 4 NACS", pw: 122, job: JOB, jw: 89,
    rows: [EQ, ["MS-9200UDLS_MB_REV3", "1", "MS-9200UDLS_MAIN BOARD R3", m("145.0000"), m("145.0000"), m("275.0000"), m("275.0000")], ["", "", "", "Total Panel Stby", m("145.0000"), "Total Panel Alarm", m("275.0000")], PD, ["SD355", "8", "SMOKE, PHOTOELECTRIC, ADDRESSABLE (Signaling line)", m("0.3000"), m("2.4000"), m("6.5000"), m("52.0000")], tper("2.4000", "52.0000"), [], tamp("147.4000", "327.0000")],
    sum: ["3.538 Ah", "0.027 Ah", "3.565 Ah", "4.456 Ah"],
  },
  {
    pos: "left-[577px] top-[325px] w-[382px] h-[150px]", cols: "grid-cols-[31px_14px_139px_59px_46px_52px_39px]", id: "P4", orange: true,
    part: GAP, pw: 122, job: JOB, jw: 88,
    rows: [EQ, MAIN, TPANEL, PD, ["CHSW/CO", "1", "CEILING HORN STROBE (Notification) 115CD 81dB", m("0.0000"), m("0.0000"), m("210.0000"), m("210.0000")], tper("0.0000", "210.0000"), [], tamp("148.0000", "485.0000")],
    sum: ["3.48 Ah", "0.38 Ah", "3.52 Ah", "4.431 Ah"],
  },
  {
    pos: "left-[958px] top-[325px] w-[377px] h-[150px]", cols: "grid-cols-[33px_14px_132px_58px_47px_52px_39px]", id: "P3",
    part: GAP, pw: 122, job: JOB, jw: 88,
    rows: [EQ, MAIN, TPANEL, PD, ["GH-T/ADFT", "1", "GEN ADD HEAT FT (Signaling line)", m("0.0000"), m("0.0000"), m("0.0000"), m("0.0000")], tper("0.0000", "0.0000"), [], tamp("148.0000", "275.0000")],
    sum: ["3.48 Ah", "0.023 Ah", "3.503 Ah", "4.379 Ah"],
  },
  {
    pos: "left-[577px] top-[474px] w-[383px] h-[158px]", cols: "grid-cols-[33px_14px_139px_59px_47px_51px_38px]", id: "P2", tall: true,
    part: GAP, pw: 124, job: JOB, jw: 87,
    rows: [EQ, MAIN, TPANEL, PD, ["GHSW/MC", "5", "CEILING HORN STROBE (Notification) 115CD 91dB", m("0.0000"), m("0.0000"), m("210.0000"), m("1080.0000")], ["GH-T/ADFT", "4", "GEN ADD HEAT FT (Signaling line)", m("0.0000"), m("0.0000"), m("0.0000"), m("0.0000")], tper("0.0000", "1080.0000"), [], tamp("148.0000", "1355.0000")],
    sum: ["3.48 Ah", "0.163 Ah", "3.643 Ah", "4.554 Ah"],
  },
  {
    pos: "left-[959px] top-[474px] w-[382px] h-[150px]", cols: "grid-cols-[32px_14px_139px_59px_46px_52px_39px]", id: "P1", tall: true,
    part: GAP, pw: 122, job: JOB, jw: 90,
    rows: [EQ, MAIN, TPANEL, PD, ["GHSW/MC", "24", "CEILING HORN STROBE (Notification) 115CD 91dB", m("0.0000"), m("0.0000"), m("210.0000"), m("5040.0000")], tper("0.0000", "5040.0000"), [], tamp("148.0000", "5315.0000")],
    sum: ["3.48 Ah", "0.443 Ah", "3.923 Ah", "4.904 Ah"],
  },
];
const sumLabels = ["Standby time: 24 Hrs", "Alarm time: 5 Min", "Battery requirement:", "Requirement with compensation:"];
const sumWidths = [51, 44, 52, 82];

function Sheet({ s }) {
  const line = s.orange ? "border-[#ff8000]" : s.gray ? "border-[#5a5a5a]" : "border-[#222]";
  const cell = `border-r border-b ${line}`;
  return (
    <div className={`absolute ${s.pos} flex flex-col border ${line} ${s.orange ? "text-[#ff8000]" : "text-black"} font-['Liberation_Sans',sans-serif] text-[5.5px] font-bold leading-[8px]`}>
      <div className={`flex h-[12px] shrink-0 items-center justify-center border-b ${line}`}>
        <Fit w={117} className="text-[7px] font-bold">{"Battery Calculations for Panel: " + s.id}</Fit>
      </div>
      <div className={`flex ${s.tall ? "h-[25px]" : "h-[24px]"} shrink-0 flex-col items-start justify-between border-b pl-[3px] ${line}`}>
        <Fit w={s.pw}>{s.part}</Fit>
        <Fit w={s.jw}>{s.job}</Fit>
      </div>
      <div className={`grid ${s.cols} h-[9px] shrink-0`}>
        {H.map((h) => (
          <div key={h} className={`flex items-center justify-center whitespace-nowrap text-[6px] ${cell}`}>{h}</div>
        ))}
      </div>
      {s.rows.map((r, i) => (
        <div key={i} className={`grid ${s.cols} h-[8px] shrink-0`}>
          {H.map((h, c) => (
            <div key={h} className={`flex items-center whitespace-nowrap ${c === 2 ? "justify-start pl-[3px] tracking-[-0.1px]" : c === 0 || c === 6 ? "justify-end tracking-[-0.25px]" : "justify-end px-px tracking-[-0.1px]"} ${cell}`}>
              {r[c] ? r[c] : null}
            </div>
          ))}
        </div>
      ))}
      <div className="flex-1" />
      {sumLabels.map((l, i) => (
        <div key={l} className="flex h-[8px] shrink-0 justify-end pr-[3px]">
          {i === 3 && <Fit w={124} className="mr-[12px]">Compensation Factors - Standby:1.25  Alarm:1.25</Fit>}
          <Fit w={sumWidths[i]}>{l}</Fit>
          <div className="w-[38px] text-right">{s.sum[i]}</div>
        </div>
      ))}
    </div>
  );
}

function Canvas() {
  return (
    <div className="relative h-[798px] w-[1534px] shrink-0 overflow-hidden bg-white">
      {sheets.map((s) => (
        <Sheet key={s.id} s={s} />
      ))}
      <div className="absolute left-[573px] top-[321px] h-[8px] w-[13px] bg-[#a0a0a0]/90" />
      {/* origin marker with its X and Y axis arrows */}
      <svg className="absolute left-[930px] top-[365px]" width="140" height="140" viewBox="0 0 140 140" fill="none">
        <path d="M19.500 109V49.500H10L29.500 9L49 49.500H39.500V99.500" stroke="#2e8b2e" />
        <path d="M40 98.500H90.500V89.500L129 109.500L90.500 129V119.500H30" stroke="#8b2a2a" />
        <circle cx="29.500" cy="109" r="10" stroke="#777" fill="#fff" />
        <path d="M29.500 109V99A10 10 0 0 0 19.500 109ZM29.500 109V119A10 10 0 0 0 39.500 109Z" fill="#000" />
        <path d="M10 109.500H50" stroke="#1010a0" />
      </svg>
      <div className="absolute left-[1513px] top-[777px] flex h-[20px] w-[20px] items-center justify-center border border-[#444] bg-[#ffffe1]"><Ic n="compass" /></div>
    </div>
  );
}

const Nav = ({ d }) => (
  <div className="flex h-[13px] w-[13px] items-center justify-center bg-[#f0f0f0]">
    <svg width="9" height="9" viewBox="0 0 9 9"><path d={d} stroke="#555" fill="#555" /></svg>
  </div>
);

function DocArea() {
  return (
    <div className="flex w-[1564px] shrink-0 flex-col border-l border-r border-[#a8acb4]">
      <div className="flex h-[19px] items-center pl-[7px] text-[#f0f0f0]">
        <Fit w={52}>Start Page</Fit>
        <Fit w={49} className="ml-[14px]">Drawing1</Fit>
        <div className="ml-[10px] flex h-[17px] w-[255px] items-center self-end rounded-t-[3px] bg-gradient-to-b from-white to-[#cdd2da] pl-[4px] text-black">
          <Fit w={228} className="font-bold">AlarmCAD Battery Calc - Smoke Test File.cad</Fit>
          <svg className="ml-[9px] mt-[2px]" width="9" height="9" viewBox="0 0 9 9"><path d="M1 1L8 8M8 1L1 8" stroke="#444" strokeWidth="1.2" /></svg>
        </div>
        <svg className="ml-auto mr-[7px]" width="24" height="10" viewBox="0 0 24 10" fill="none" stroke="#6b6b6b"><path d="M5.500 1V9L1 5ZM18.500 1V9L23 5Z" /></svg>
      </div>
      <div className="flex flex-1 flex-col border-[3px] border-b-[7px] border-r-[4px] border-[#ececec]">
        <div className="flex flex-1 flex-col border-[3px] border-b-0 border-r-[2px] border-t-[3px] border-[#787878]">
          <div className="flex">
            <Canvas />
            <div className="flex-1 bg-[#f0f0f0] pt-[77px]"><div className="ml-[7px] h-[17px] w-[2px] bg-[#858585]" /></div>
          </div>
          <div className="h-[16px] shrink-0 bg-[#f0f0f0] pt-[7px]"><div className="ml-[83px] h-[2px] w-[17px] bg-[#858585]" /></div>
          <div className="flex flex-1 bg-gradient-to-b from-[#4f4f4f] via-[#707070] to-[#757575] pt-px">
            <div className="flex gap-[3px] pt-[2px]">
              <Nav d="M1.500 1V8M6.500 1.500V7.500L3.500 4.500Z" />
              <Nav d="M6 1V8L2.500 4.500Z" />
              <Nav d="M3 1V8L6.500 4.500Z" />
              <Nav d="M2.500 1.500V7.500L5.500 4.500ZM7.500 1V8" />
            </div>
            <div className="relative ml-[5px] h-[16px] w-[112px] text-black">
              <svg className="absolute left-0 top-0" width="112" height="16" viewBox="0 0 112 16">
                <path d="M60 0H112L96 16H52Z" fill="#c9cdd5" stroke="#eee" />
                <path d="M0 0H61L46 16H3Q1 16 0 13Z" fill="#f2f3f5" stroke="#fff" />
                <path d="M61 0L46 16" stroke="#555" />
              </svg>
              <div className="absolute left-[8px] top-0 flex gap-[14px] leading-[17px]">
                <Fit w={39} className="font-bold">*Model</Fit>
                <Fit w={37}>Sheet 1</Fit>
              </div>
            </div>
          </div>
        </div>
      </div>
    </div>
  );
}

const rights = [["Crossing Window", 96, "h-[109px]"], ["Like Selected", 74, "h-[91px]"], ["Select Last", 61, "h-[77px]"], ["Notifier in Rect", 82, "h-[97px]"], ["Initiator in Rect", 83, "h-[98px]"], ["Wire Path in Rect", 95, "h-[111px]"], ["WP Label in Rect", 95, "h-[111px]"], ["Alarm Sys Comp in Rect", 134, "h-[150px]"]];

function RightTools() {
  return (
    <div className="w-[25px] shrink-0">
      <div className={vbar + " h-[849px] overflow-hidden border-r border-[#565d69] pt-[4px]"}>
        <Grip horizontal />
        <div className="ml-px mt-[4px] flex flex-col">
          {rights.map(([t, w, h], i) => (
            <div key={t} className={`${h} flex w-[15px] shrink-0 items-center justify-center ${i < 7 ? "border-b border-[#5f656f] shadow-[0_1px_0_#eee]" : ""}`}>
              <Fit v w={w} className="leading-[15px] [writing-mode:vertical-rl]">{t}</Fit>
            </div>
          ))}
        </div>
      </div>
      <VCap h="h-[9px]" />
    </div>
  );
}

const On = ({ n, w }) => (
  <C w={w}><div className={"flex h-[20px] w-[20px] shrink-0 items-center justify-center " + orange}><Ic n={n} /></div></C>
);
const bbar = "flex shrink-0 bg-gradient-to-b from-[#cfd2d8] to-[#9ba1ab]";

function BottomBars() {
  return (
    <div className="flex h-[25px]">
      <div className={bbar + " w-[124px] items-center"}>
        <C w="w-[10px]"><Grip /></C>
        <C w="w-[22px]"><Ic n="plus" /></C>
        <C w="w-[19px]"><Ic n="go" /></C>
        <div className="ml-[6px] h-[15px] w-[60px] bg-white" />
      </div>
      <Cap />
      <div className={bbar + " w-[314px] items-center"}>
        <C w="w-[9px]"><Grip /></C>
        <C w="w-[20px]"><Ic n="target" /></C>
        <C w="w-[26px]"><Ic n="zzero" /></C>
        <C w="w-[18px]"><Ic n="ruler" /></C>
        <Sep w="w-[12px]" />
        <C w="w-[18px]"><Ic n="s1" /></C>
        <On n="s2" w="w-[26px]" />
        <On n="s3" w="w-[19px]" />
        <C w="w-[24px]"><Ic n="s4" /></C>
        <C w="w-[21px]"><Ic n="s5" /></C>
        <C w="w-[23px]"><Ic n="s6" /></C>
        <C w="w-[21px]"><Ic n="s7" /></C>
        <C w="w-[23px]"><Ic n="s8" /></C>
        <Sep w="w-[7px]" />
        <C w="w-[21px]"><Ic n="s9" /></C>
        <On n="omag" w="w-[24px]" />
      </div>
      <Cap w="w-[11px]" />
      <div className={bbar + " w-[430px] items-center"}>
        <C w="w-[9px]"><Grip /></C>
        <C w="w-[20px]"><Ic n="layers" /></C>
        <On n="plan" w="w-[25px]" />
        <C w="w-[20px]"><Ic n="extents" /></C>
        <C w="w-[22px]"><Ic n="zwin" /></C>
        <div className={"ml-[2px] flex h-[20px] w-[85px] items-center justify-center " + orange}><Fit w={77}>Lock On Target</Fit></div>
        <C w="w-[24px]"><div className="flex h-[20px] w-[20px] shrink-0 items-center justify-center bg-gradient-to-b from-[#fff6dc] to-[#ffe19a]"><Ic n="zin" /></div></C>
        <C w="w-[20px]"><Ic n="zout" /></C>
        <C w="w-[24px]"><Ic n="sel" /></C>
        <C w="w-[20px]"><Ic n="prev" /></C>
        <C w="w-[22px]"><Ic n="next" /></C>
        <C w="w-[24px]"><Ic n="cam" /></C>
        <C w="w-[19px]"><Ic n="props" /></C>
        <C w="w-[27px]"><Ic n="view" /></C>
        <C w="w-[16px]"><Ic n="rot" /></C>
        <C w="w-[29px]"><Ic n="flash" /></C>
        <C w="w-[14px]"><Ic n="vars" /></C>
      </div>
      <Cap />
      <div className={bbar + " w-[340px] items-center"}>
        <C w="w-[9px]"><Grip /></C>
        <div className="ml-[3px] flex h-[15px] w-[60px] items-center justify-center bg-white">90</div>
        <Sep w="w-[14px]" />
        <C w="w-[16px]"><Ic n="ccw" /></C>
        <C w="w-[20px]">+Z</C>
        <C w="w-[27px]"><Ic n="cw" /></C>
        <C w="w-[10px]">-Z</C>
        <Sep w="w-[18px]" />
        <C w="w-[14px]"><Ic n="up" /></C>
        <C w="w-[25px]">+X</C>
        <C w="w-[19px]"><Ic n="down" /></C>
        <C w="w-[16px]">-X</C>
        <Sep w="w-[12px]" />
        <C w="w-[17px]"><Ic n="left" /></C>
        <C w="w-[15px]">-Y</C>
        <C w="w-[25px]"><Ic n="right" /></C>
        <C w="w-[14px]" className="ml-[2px]">+Y</C>
      </div>
      <Cap w="w-[11px]" />
    </div>
  );
}

const VL = ({ className = "" }) => <div className={"h-[13px] w-[2px] border-l border-black bg-[#777] " + className} />;

export default function App() {
  return (
    <div className="flex h-[1032px] w-[1920px] flex-col overflow-hidden bg-[#535353] font-['Noto_Sans','Open_Sans',sans-serif] text-[12px] leading-[16px] text-[#111]">
      <div className="flex h-[23px] shrink-0 items-center bg-gradient-to-r from-[#f3f3f3] via-[#f9f0ee] to-[#f9f0eb] pl-[2px]">
        <Ic n="app" />
        <Fit w={414} className="ml-[6px]">AlarmCAD® 2023 Professional - [AlarmCAD Battery Calc - Smoke Test File.cad]</Fit>
        <svg className="mb-[2px] ml-auto mr-[18px]" width="104" height="12" viewBox="0 0 104 12" fill="none" stroke="#111">
          <path d="M1 6.500H11" />
          <rect x="46.500" y="3.500" width="7" height="7" rx="1.500" />
          <path d="M48.500 1.500H54Q55.500 1.500 55.500 3.500V8.500" />
          <path d="M92.500 1.500L101.500 10.500M101.500 1.500L92.500 10.500" />
        </svg>
      </div>
      <div className="flex h-[23px] shrink-0 items-center gap-[15px] pl-[3px] text-[#f0f0f0]">
        <Ic n="doc" className="mr-[-5px]" />
        {menus.map(([t, w]) => (
          <Fit key={t} w={w} className="mb-px">{t}</Fit>
        ))}
        <svg className="ml-auto mr-[4px] mt-[4px]" width="42" height="10" viewBox="0 0 42 10" fill="none" stroke="#a3adbb">
          <path d="M1 8H8" strokeWidth="2" />
          <path d="M16.500 3.500H22.500V8.500H16.500ZM18 1.500H24.500V6" />
          <path d="M33 1L40 9M40 1L33 9" strokeWidth="2" />
        </svg>
      </div>
      <TopBars />
      <div className="flex h-[865px] shrink-0">
        <LeftTools />
        <div className="ml-px flex pt-px">
          <Layers />
        </div>
        <div className="ml-[5px] flex border-t border-[#a8acb4]">
          <DocArea />
        </div>
        <div className="ml-px">
          <RightTools />
        </div>
      </div>
      <div className="ml-[26px] mr-[27px] flex h-[19px] shrink-0 items-center bg-gradient-to-b from-[#434755] from-30% to-[#2e2e2e] to-45% pl-[4px] text-[#f0f0f0]">
        <Fit w={183} className="mt-[3px]">Increases the camera magnification.</Fit>
        <div className="ml-auto mt-[3px] flex items-center">
          <VL /><Fit w={51} className="ml-[3px]">1 selected</Fit>
          <VL className="ml-[3px]" /><VL className="ml-[4px]" /><Fit w={51} className="ml-[3px]">{"Elev1: 0'-0"}</Fit>
          <VL className="ml-[2px]" /><VL className="ml-[4px]" /><Fit w={49} className="ml-[3px]">Text table</Fit>
          <VL className="ml-[3px]" /><Fit w={27} className="ml-[3px]"># Off</Fit>
          <VL className="ml-[1px]" /><Fit w={25} className="-mr-[2px] ml-[3px]">Foot</Fit>
        </div>
      </div>
      <BottomBars />
    </div>
  );
}
